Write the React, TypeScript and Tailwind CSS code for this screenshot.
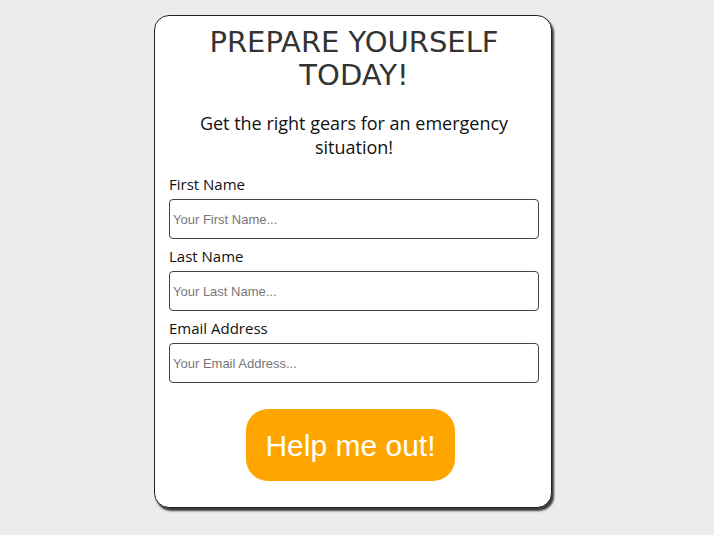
import React from "react";

const fields = [
  { label: "First Name", placeholder: "Your First Name..." },
  { label: "Last Name", placeholder: "Your Last Name..." },
  { label: "Email Address", placeholder: "Your Email Address..." },
];

export default function App() {
  return (
    <div className="min-h-[535px] w-full bg-[#ececec] pt-[15px]">
      <div className="ml-[154px] w-[398px] rounded-[15px] border border-[#222] bg-white pl-[14px] pr-[12px] pb-[26px] pt-[10px] shadow-[2px_3px_2px_rgba(0,0,0,0.75)]">
        <h1 className="text-center text-[29px] leading-[33px] text-[#333] font-['DejaVu_Sans',sans-serif]">
          PREPARE YOURSELF
          <br />
          TODAY!
        </h1>
        <p className="mx-auto mt-[19px] w-[320px] text-center text-[18px] leading-[24px] text-[#111] font-medium font-['Open_Sans',sans-serif]">
          Get the right gears for an emergency situation!
        </p>
        <form className="mt-[15px] flex flex-col" onSubmit={(e) => e.preventDefault()}>
          {fields.map((f) => (
            <div key={f.label} className="mb-[7px] flex flex-col">
              <label className="mb-[4px] text-[15px] leading-[21px] text-[#111] font-medium font-['Open_Sans',sans-serif]">
                {f.label}
              </label>
              <input
                type="text"
                placeholder={f.placeholder}
                className="h-[40px] w-[370px] rounded-[4px] border border-[#444] px-[3px] text-[13px] text-[#333] placeholder:text-[#777] font-['Liberation_Sans',sans-serif] outline-none"
              />
            </div>
          ))}
          <button
            type="submit"
            className="ml-[77px] mt-[19px] h-[72px] w-[209px] rounded-[22px] bg-[#ffa500] text-[30px] text-white font-['Liberation_Sans',sans-serif]"
          >
            Help me out!
          </button>
        </form>
      </div>
    </div>
  );
}
